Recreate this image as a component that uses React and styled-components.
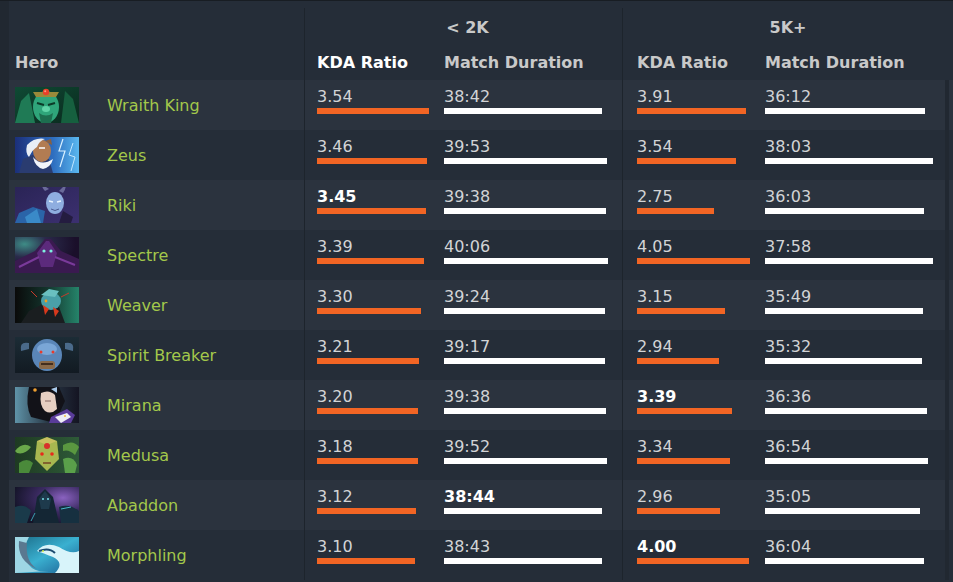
import React from "react";
import styled, { createGlobalStyle } from "styled-components";

const GlobalStyle = createGlobalStyle`
  html, body {
    margin: 0;
    padding: 0;
    background: #252d38;
  }
  body {
    font-family: "DejaVu Sans", Verdana, sans-serif;
    font-size: 16px;
    overflow: hidden;
  }
`;

const COLS = "295px 128px 190px 131px 192px 4px 1fr";

const heroes = [
  { name: "Wraith King", k1: "3.54", d1: "38:42", k2: "3.91", d2: "36:12" },
  { name: "Zeus", k1: "3.46", d1: "39:53", k2: "3.54", d2: "38:03" },
  { name: "Riki", k1: "3.45", d1: "39:38", k2: "2.75", d2: "36:03", bold: "k1" },
  { name: "Spectre", k1: "3.39", d1: "40:06", k2: "4.05", d2: "37:58" },
  { name: "Weaver", k1: "3.30", d1: "39:24", k2: "3.15", d2: "35:49" },
  { name: "Spirit Breaker", k1: "3.21", d1: "39:17", k2: "2.94", d2: "35:32" },
  { name: "Mirana", k1: "3.20", d1: "39:38", k2: "3.39", d2: "36:36", bold: "k2" },
  { name: "Medusa", k1: "3.18", d1: "39:52", k2: "3.34", d2: "36:54" },
  { name: "Abaddon", k1: "3.12", d1: "38:44", k2: "2.96", d2: "35:05", bold: "d1" },
  { name: "Morphling", k1: "3.10", d1: "38:43", k2: "4.00", d2: "36:04", bold: "k2" },
];

const secs = (t) => {
  const [m, s] = t.split(":").map(Number);
  return m * 60 + s;
};

// bar scale per column (px per unit)
const scale = {
  k1: (v) => parseFloat(v) * 31.65,
  d1: (v) => secs(v) * 0.06816,
  k2: (v) => parseFloat(v) * 27.9,
  d2: (v) => secs(v) * 0.0736,
};

/* ---------- portraits ---------- */

const portraits = {
  "Wraith King": (
    <>
      <defs>
        <linearGradient id="wk" x1="0" y1="0" x2="1" y2="1">
          <stop offset="0" stopColor="#0f4a34" />
          <stop offset="1" stopColor="#0a2a1e" />
        </linearGradient>
      </defs>
      <rect width="64" height="36" fill="url(#wk)" />
      <path d="M0 36 L6 14 L14 6 L20 36Z" fill="#1f7a55" />
      <path d="M64 36 L58 12 L50 4 L46 36Z" fill="#16603f" />
      <ellipse cx="31" cy="20" rx="13" ry="16" fill="#2fa57a" />
      <path d="M18 5 L44 5 L41 10 L21 10Z" fill="#9a8a3a" />
      <circle cx="31" cy="5" r="3.2" fill="#e8402a" />
      <circle cx="30.2" cy="4.3" r="1" fill="#ff9a80" />
      <path d="M22 16 L29 18 M33 18 L40 16" stroke="#0c3a28" strokeWidth="2" />
      <path d="M24 26 Q31 31 38 26 L36 36 L26 36Z" fill="#1d6e4f" />
      <ellipse cx="31" cy="22" rx="4" ry="3" fill="#5fd3a6" />
    </>
  ),
  Zeus: (
    <>
      <defs>
        <linearGradient id="ze" x1="0" y1="0" x2="1" y2="0">
          <stop offset="0" stopColor="#1b2f7a" />
          <stop offset="0.6" stopColor="#2f6fc0" />
          <stop offset="1" stopColor="#5ab8f0" />
        </linearGradient>
      </defs>
      <rect width="64" height="36" fill="url(#ze)" />
      <path d="M48 2 L44 14 L50 14 L45 30" stroke="#d8f0ff" strokeWidth="1.2" fill="none" />
      <path d="M58 6 L54 18 L60 20 L56 34" stroke="#bfe6ff" strokeWidth="1" fill="none" />
      <path d="M4 36 L8 22 L22 16 L34 22 L38 36Z" fill="#2a3c70" />
      <ellipse cx="27" cy="14" rx="9" ry="11" fill="#b27c52" />
      <path d="M12 8 Q20 0 30 2 Q24 4 22 10 Q18 12 14 20 Q10 16 12 8Z" fill="#e9eef6" />
      <path d="M18 20 Q26 30 38 22 Q36 30 28 32 Q20 30 18 20Z" fill="#f1f4fa" />
      <path d="M24 11 L30 11" stroke="#fff" strokeWidth="1.5" />
      <path d="M30 4 L36 2 L37 8Z" fill="#8a6040" />
    </>
  ),
  Riki: (
    <>
      <defs>
        <linearGradient id="ri" x1="0" y1="0" x2="1" y2="1">
          <stop offset="0" stopColor="#2a2456" />
          <stop offset="1" stopColor="#3c3070" />
        </linearGradient>
      </defs>
      <rect width="64" height="36" fill="url(#ri)" />
      <path d="M0 36 L4 26 L18 20 L30 24 L28 36Z" fill="#2a64a8" />
      <path d="M10 30 L22 22 L26 36 L12 36Z" fill="#3a8ac8" />
      <path d="M30 4 Q26 0 28 -2 L34 2Z" fill="#6a6a9a" />
      <path d="M48 6 Q52 0 50 -2 L44 4Z" fill="#6a6a9a" />
      <ellipse cx="40" cy="16" rx="9" ry="11" fill="#8faee0" />
      <path d="M34 14 L38 15 M42 15 L46 14" stroke="#e8f4ff" strokeWidth="1.4" />
      <path d="M36 22 Q40 25 44 22" stroke="#4a5a90" strokeWidth="1" fill="none" />
      <path d="M48 24 L58 30 L56 36 L44 36Z" fill="#241c40" />
    </>
  ),
  Spectre: (
    <>
      <defs>
        <radialGradient id="sp" cx="0.15" cy="0.2" r="0.8">
          <stop offset="0" stopColor="#3e8c86" />
          <stop offset="0.45" stopColor="#2a2a4a" />
          <stop offset="1" stopColor="#1a0f2a" />
        </radialGradient>
      </defs>
      <rect width="64" height="36" fill="url(#sp)" />
      <path d="M0 24 L20 14 L30 2 L36 2 L46 14 L64 22 L64 36 L0 36Z" fill="#3a1a50" />
      <path d="M22 16 L31 4 L34 4 L42 16 L38 30 L26 30Z" fill="#5c2a7c" />
      <circle cx="29" cy="14" r="1.6" fill="#7ff0e0" />
      <circle cx="36" cy="14" r="1.6" fill="#7ff0e0" />
      <path d="M4 30 L24 20 M40 20 L60 28" stroke="#7a3a9a" strokeWidth="2" />
    </>
  ),
  Weaver: (
    <>
      <defs>
        <linearGradient id="we" x1="0" y1="0" x2="1" y2="0">
          <stop offset="0" stopColor="#0a0a0a" />
          <stop offset="0.5" stopColor="#13342c" />
          <stop offset="1" stopColor="#25846a" />
        </linearGradient>
      </defs>
      <rect width="64" height="36" fill="url(#we)" />
      <path d="M6 36 L14 24 L26 18 L44 20 L50 36Z" fill="#1a1e20" />
      <ellipse cx="36" cy="14" rx="10" ry="9" fill="#4aa0a8" />
      <path d="M26 8 L34 2 L44 4 L40 10Z" fill="#6ac0c0" />
      <path d="M28 18 L34 22 L30 28Z" fill="#d8391c" />
      <path d="M38 20 L44 24 L40 30Z" fill="#d8391c" />
      <circle cx="31" cy="14" r="1.4" fill="#f0a020" />
      <path d="M22 10 L16 4 M46 10 L54 6" stroke="#c83a2a" strokeWidth="1" />
    </>
  ),
  "Spirit Breaker": (
    <>
      <defs>
        <linearGradient id="sb" x1="0" y1="0" x2="0" y2="1">
          <stop offset="0" stopColor="#1c2c36" />
          <stop offset="1" stopColor="#121a22" />
        </linearGradient>
      </defs>
      <rect width="64" height="36" fill="url(#sb)" />
      <path d="M14 6 Q4 4 6 14 L14 12Z" fill="#4a6a8a" />
      <path d="M50 6 Q60 4 58 14 L50 12Z" fill="#4a6a8a" />
      <ellipse cx="32" cy="18" rx="15" ry="16" fill="#5a86b8" />
      <ellipse cx="32" cy="12" rx="10" ry="6" fill="#7aa6d6" />
      <circle cx="26" cy="15" r="1.5" fill="#e83a2a" />
      <circle cx="38" cy="15" r="1.5" fill="#e83a2a" />
      <rect x="24" y="24" width="16" height="8" rx="3" fill="#8a6a4a" />
      <path d="M26 27 L38 27" stroke="#2a1a10" strokeWidth="1.5" />
    </>
  ),
  Mirana: (
    <>
      <defs>
        <linearGradient id="mi" x1="0" y1="0" x2="1" y2="0">
          <stop offset="0" stopColor="#5f93a8" />
          <stop offset="0.5" stopColor="#2a3a48" />
          <stop offset="1" stopColor="#141422" />
        </linearGradient>
      </defs>
      <rect width="64" height="36" fill="url(#mi)" />
      <path d="M14 0 L44 0 L50 14 L40 36 L16 30 Q10 18 14 0Z" fill="#121218" />
      <path d="M26 6 Q34 2 40 8 L42 22 Q36 28 30 24 Q24 18 26 6Z" fill="#e6cfc2" />
      <path d="M30 14 L36 14" stroke="#6a4a4a" strokeWidth="0.8" />
      <circle cx="20" cy="3" r="1.8" fill="#f0a030" />
      <path d="M36 2 L42 0 L42 6Z" fill="#a8c8e8" />
      <path d="M36 30 L52 22 L60 28 L56 36 L34 36Z" fill="#5a3c9a" />
      <path d="M40 30 L52 26 L56 30 L46 36Z" fill="#eeeef6" />
      <circle cx="50" cy="29" r="1" fill="#f0c040" />
    </>
  ),
  Medusa: (
    <>
      <defs>
        <linearGradient id="me" x1="0" y1="0" x2="1" y2="0">
          <stop offset="0" stopColor="#1e3a22" />
          <stop offset="1" stopColor="#2e5a38" />
        </linearGradient>
      </defs>
      <rect width="64" height="36" fill="url(#me)" />
      <path d="M0 14 Q8 4 16 10 Q10 18 2 16Z" fill="#6aa84a" />
      <path d="M48 8 Q58 2 64 10 L60 18 Q54 12 48 14Z" fill="#5a9840" />
      <path d="M4 26 Q12 20 18 26 L14 36 L4 36Z" fill="#4a8a3a" />
      <path d="M48 22 Q58 18 62 28 L60 36 L50 36Z" fill="#5aa04a" />
      <path d="M22 4 L42 4 L44 22 L32 34 L20 22Z" fill="#a8b850" />
      <path d="M22 4 L32 0 L42 4 L32 8Z" fill="#c8c060" />
      <circle cx="32" cy="9" r="3" fill="#d8302a" />
      <circle cx="27" cy="17" r="1.8" fill="#e82a1a" />
      <circle cx="37" cy="17" r="1.8" fill="#e82a1a" />
      <path d="M28 26 L36 26" stroke="#6a2a1a" strokeWidth="1.2" />
    </>
  ),
  Abaddon: (
    <>
      <defs>
        <radialGradient id="ab" cx="0.75" cy="0.3" r="0.8">
          <stop offset="0" stopColor="#8a62c0" />
          <stop offset="0.5" stopColor="#3a2a60" />
          <stop offset="1" stopColor="#141428" />
        </radialGradient>
      </defs>
      <rect width="64" height="36" fill="url(#ab)" />
      <path d="M0 20 Q10 16 16 24 L12 36 L0 36Z" fill="#1a3a4a" />
      <path d="M18 36 L22 10 L30 2 L38 10 L44 36Z" fill="#142634" />
      <path d="M24 12 L30 4 L36 12 L34 22 L26 22Z" fill="#1e3a4c" />
      <circle cx="28" cy="12" r="1" fill="#7ae0e8" />
      <circle cx="33" cy="12" r="1" fill="#7ae0e8" />
      <path d="M44 20 Q54 16 64 24 L64 36 L46 36Z" fill="#163040" />
      <path d="M46 22 L56 20" stroke="#4ab8c8" strokeWidth="1" />
      <path d="M20 26 L16 34" stroke="#3aa0b0" strokeWidth="1" />
    </>
  ),
  Morphling: (
    <>
      <defs>
        <linearGradient id="mo" x1="0" y1="0" x2="1" y2="1">
          <stop offset="0" stopColor="#1a6a86" />
          <stop offset="0.5" stopColor="#3ab0d0" />
          <stop offset="1" stopColor="#1a5a90" />
        </linearGradient>
      </defs>
      <rect width="64" height="36" fill="url(#mo)" />
      <path d="M0 0 L14 0 Q6 14 14 28 Q20 36 34 34 L0 36Z" fill="#9ed6e4" />
      <path d="M4 4 Q2 24 22 32 Q10 24 12 6Z" fill="#5a7890" />
      <path d="M22 14 Q30 4 44 10 Q56 18 64 14 L64 36 L40 36 Q50 26 38 20 Q28 16 22 14Z" fill="#d8f4fa" />
      <path d="M24 14 Q34 10 40 16" stroke="#1a4a70" strokeWidth="2" fill="none" />
      <circle cx="28" cy="14" r="1" fill="#d8f040" />
    </>
  ),
};

/* ---------- layout ---------- */

const Page = styled.div`
  display: flex;
  height: 582px;
  border-top: 1px solid #181d23;
  box-sizing: border-box;
`;

const Gutter = styled.div`
  width: 9px;
  flex: none;
  background: #212831;
`;

const Table = styled.div`
  flex: 1;
  padding-top: 7px;
  min-width: 0;
`;

const Grid = styled.div`
  display: grid;
  grid-template-columns: ${COLS};
  height: ${(p) => p.$h}px;
  background: ${(p) => (p.$alt ? "#2b333e" : "transparent")};
`;

const GroupCell = styled.div`
  grid-column: ${(p) => p.$span};
  border-left: 1px solid #1d242c;
  padding: 10px 0 0 8px;
  text-align: center;
  font-weight: bold;
  line-height: 19px;
  color: #c9c9c9;
`;

const HeadCell = styled.div`
  padding: 9px 0 0 ${(p) => p.$pad}px;
  border-left: ${(p) => (p.$divider ? "1px solid #1d242c" : "none")};
  font-weight: bold;
  line-height: 19px;
  color: ${(p) => (p.$active ? "#ffffff" : "#c9c9c9")};
  white-space: nowrap;
`;

const HeroCell = styled.div`
  display: flex;
  align-items: center;
  gap: 28px;
  padding-left: 6px;
`;

const Portrait = styled.svg`
  display: block;
  width: 64px;
  height: 36px;
  flex: none;
`;

const HeroName = styled.span`
  color: #a3c84b;
  line-height: 19px;
`;

const StatCell = styled.div`
  padding: 7px 0 0 ${(p) => p.$pad}px;
  border-left: ${(p) => (p.$divider ? "1px solid #1d242c" : "none")};
`;

const Value = styled.div`
  line-height: 19px;
  color: ${(p) => (p.$bold ? "#ffffff" : "#d2d4d6")};
  font-weight: ${(p) => (p.$bold ? "bold" : "normal")};
`;

const Bar = styled.div`
  margin-top: 2px;
  height: 6px;
  background: ${(p) => (p.$kda ? "#f26524" : "#ffffff")};
`;

const GapCell = styled.div`
  background: #212831;
`;

const statCols = [
  { key: "k1", pad: 12, divider: true, kda: true },
  { key: "d1", pad: 12 },
  { key: "k2", pad: 14, divider: true, kda: true },
  { key: "d2", pad: 12 },
];

const HeroRow = ({ hero, alt }) => (
  <Grid $h={50} $alt={alt}>
    <HeroCell>
      <Portrait viewBox="0 0 64 36" preserveAspectRatio="none">
        {portraits[hero.name]}
      </Portrait>
      <HeroName>{hero.name}</HeroName>
    </HeroCell>
    {statCols.map((c) => (
      <StatCell key={c.key} $pad={c.pad} $divider={c.divider}>
        <Value $bold={hero.bold === c.key}>{hero[c.key]}</Value>
        <Bar
          $kda={c.kda}
          style={{ width: Math.round(scale[c.key](hero[c.key])) }}
        />
      </StatCell>
    ))}
    <GapCell />
    <div />
  </Grid>
);

export default function App() {
  return (
    <>
      <GlobalStyle />
      <Page>
        <Gutter />
        <Table>
          <Grid $h={36}>
            <div />
            <GroupCell $span="2 / 4">&lt; 2K</GroupCell>
            <GroupCell $span="4 / 6">5K+</GroupCell>
          </Grid>
          <Grid $h={36}>
            <HeadCell $pad={6}>Hero</HeadCell>
            <HeadCell $pad={12} $divider $active>
              KDA Ratio
            </HeadCell>
            <HeadCell $pad={12}>Match Duration</HeadCell>
            <HeadCell $pad={14} $divider>
              KDA Ratio
            </HeadCell>
            <HeadCell $pad={12}>Match Duration</HeadCell>
          </Grid>
          {heroes.map((h, i) => (
            <HeroRow key={h.name} hero={h} alt={i % 2 === 0} />
          ))}
        </Table>
      </Page>
    </>
  );
}
